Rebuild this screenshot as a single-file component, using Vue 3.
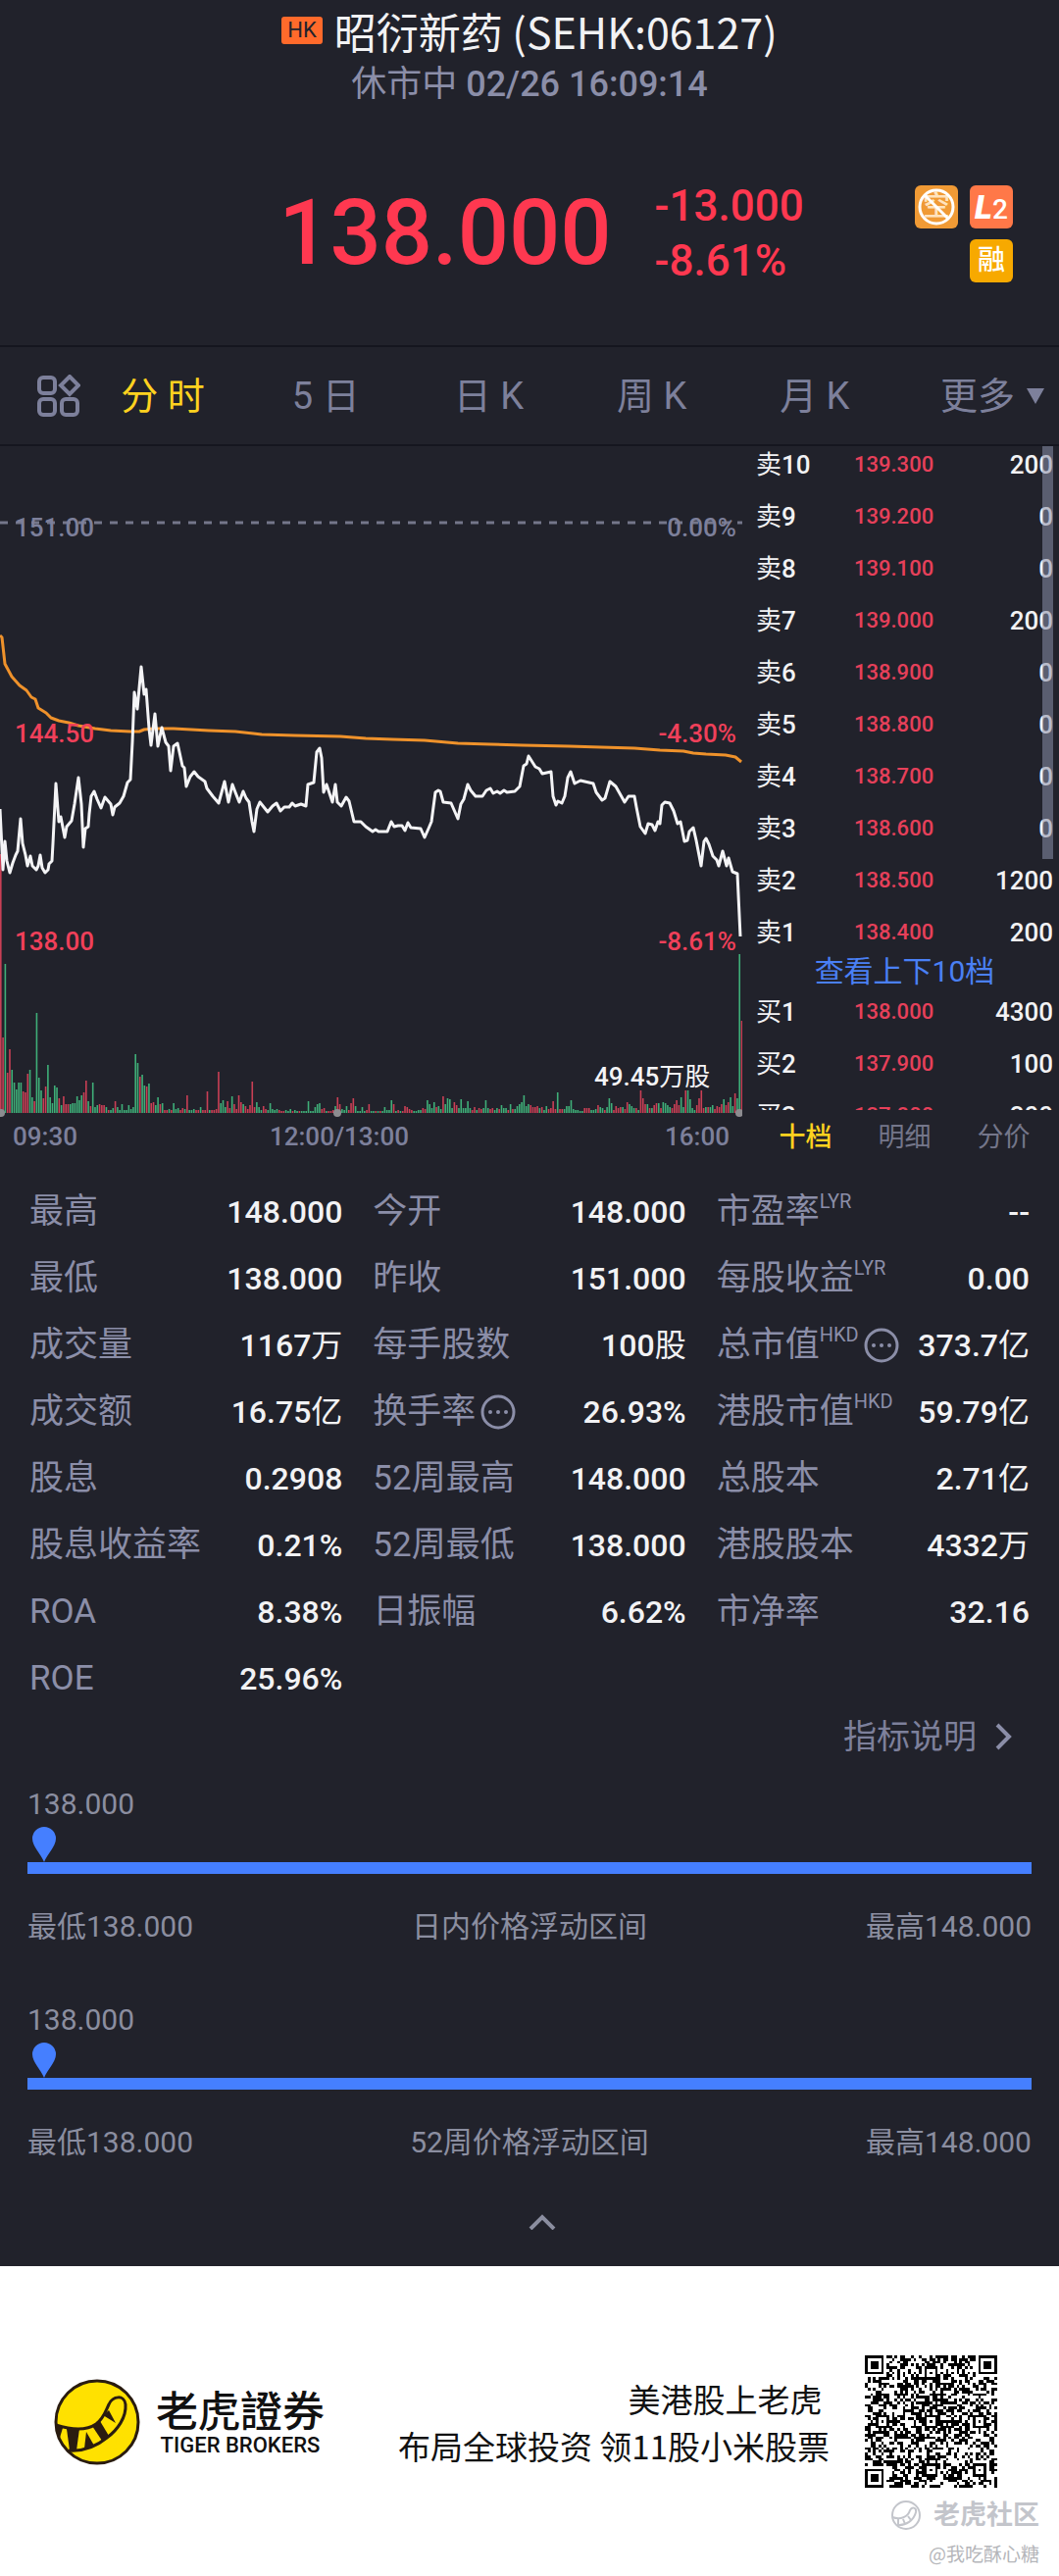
<template>
  <div class="page">
    <main class="quote">
      <header class="head">
        <h1 class="title"><span class="market">HK</span>昭衍新药 (SEHK:06127)</h1>
        <p class="status">休市中 <span class="num">02/26 16:09:14</span></p>
        <div class="price-row">
          <div class="price-main">
            <strong class="price">138.000</strong>
            <div class="change">
              <span>-13.000</span>
              <span>-8.61%</span>
            </div>
          </div>
          <div class="badges">
            <span class="badge short">空
              <svg viewBox="0 0 44 44" aria-hidden="true">
                <circle cx="22" cy="22" r="17" />
                <path d="M10 10 34 34" />
              </svg>
            </span>
            <span class="badge level"><b>L</b>2</span>
            <span class="badge margin">融</span>
          </div>
        </div>
      </header>

      <nav class="periods">
        <button class="layout-btn" aria-label="布局">
          <svg viewBox="0 0 44 44">
            <rect x="2" y="3" width="16" height="16" rx="4" />
            <path d="M33 2 42 11 33 20 24 11Z" />
            <rect x="2" y="25" width="16" height="16" rx="4" />
            <rect x="25" y="25" width="16" height="16" rx="4" />
          </svg>
        </button>
        <button
          v-for="p in periods"
          :key="p"
          class="period"
          :class="{active: p === period}"
          @click="period = p"
        >{{ p }}</button>
        <button class="period more">更多
          <svg viewBox="0 0 18 16" aria-hidden="true"><path d="M0 0H18L9 16Z" /></svg>
        </button>
      </nav>

      <section class="market-view">
        <svg class="chart" viewBox="0 0 757 735">
          <line class="base" x1="0" y1="78" x2="757" y2="78" />
          <rect
            v-for="(v, i) in volumes"
            :key="i"
            :x="i * 2.29"
            :y="680 - Math.abs(v)"
            width="1.6"
            :height="Math.abs(v)"
            :class="v < 0 ? 'down' : 'up'"
          />
          <polyline class="average" :points="average" />
          <polyline class="trend" :points="trend" />
          <circle cx="1" cy="680" r="4" />
          <circle cx="344" cy="680" r="4" />
          <circle cx="754" cy="680" r="4" />
          <rect class="label-bg" x="602" y="625" width="130" height="32" />
          <text class="muted" x="15" y="92">151.00</text>
          <text class="muted" x="751" y="92" text-anchor="end">0.00%</text>
          <text class="red" x="15" y="302">144.50</text>
          <text class="red" x="751" y="302" text-anchor="end">-4.30%</text>
          <text class="red" x="15" y="514">138.00</text>
          <text class="red" x="751" y="514" text-anchor="end">-8.61%</text>
          <text class="white" x="606" y="652">49.45<tspan class="unit">万股</tspan></text>
          <text class="muted" x="13" y="713">09:30</text>
          <text class="muted" x="346" y="713" text-anchor="middle">12:00/13:00</text>
          <text class="muted" x="744" y="713" text-anchor="end">16:00</text>
        </svg>

        <aside class="book">
          <div class="book-list">
            <table class="sells">
              <tbody>
                <tr v-for="row in sells" :key="row[0]">
                  <th><span class="unit">卖</span>{{ row[0] }}</th>
                  <td class="book-price">{{ row[1] }}</td>
                  <td>{{ row[2] }}</td>
                </tr>
              </tbody>
            </table>
            <a class="book-link" href="#">查看上下10档</a>
            <table>
              <tbody>
                <tr v-for="row in buys" :key="row[0]">
                  <th><span class="unit">买</span>{{ row[0] }}</th>
                  <td class="book-price">{{ row[1] }}</td>
                  <td>{{ row[2] }}</td>
                </tr>
              </tbody>
            </table>
            <div class="thumb"></div>
          </div>
          <div class="book-tabs">
            <button
              v-for="t in bookTabs"
              :key="t"
              :class="{active: t === bookTab}"
              @click="bookTab = t"
            >{{ t }}</button>
          </div>
        </aside>
      </section>

      <dl class="stats">
        <div v-for="s in stats" :key="s.name" class="stat">
          <dt>{{ s.name }}<sup v-if="s.sup">{{ s.sup }}</sup><svg v-if="s.tip" viewBox="0 0 36 36" aria-hidden="true">
            <circle class="ring" cx="18" cy="18" r="16" />
            <circle cx="10" cy="18" r="2" />
            <circle cx="18" cy="18" r="2" />
            <circle cx="26" cy="18" r="2" />
          </svg></dt>
          <dd>{{ s.value }}<span v-if="s.unit" class="unit">{{ s.unit }}</span></dd>
        </div>
      </dl>

      <div class="explain">
        <a href="#">指标说明
          <svg viewBox="0 0 18 28" aria-hidden="true"><path d="M3 2 15 14 3 26" /></svg>
        </a>
      </div>

      <section v-for="r in ranges" :key="r" class="range">
        <div class="range-now">138.000</div>
        <svg class="pin" viewBox="0 0 26 36" aria-hidden="true">
          <path d="M13 36C10 28 1 20 1 12a12 12 0 0 1 24 0C25 20 16 28 13 36Z" />
        </svg>
        <div class="range-bar"></div>
        <div class="range-text">
          <span>最低138.000</span>
          <span>{{ r }}</span>
          <span>最高148.000</span>
        </div>
      </section>

      <button class="collapse" aria-label="收起">
        <svg viewBox="0 0 28 16"><path d="M2 15 14 3 26 15" /></svg>
      </button>
    </main>

    <footer class="foot">
      <div class="foot-row">
        <svg class="logo" viewBox="0 0 88 88" aria-hidden="true">
          <circle cx="44" cy="44" r="42" fill="#ffe100" stroke="#2a1c10" stroke-width="3" />
          <g fill="none" stroke="#2a1c10" stroke-width="3">
            <path d="M2 47C18 52 33 53 43 46C51 40 53 32 56 26C60 17 72 16 73 26C74 39 65 52 54 60C43 69 29 74 15 73" />
          </g>
          <g fill="#2a1c10">
            <path d="M2 46 9 50 6 60 3 56Z" />
            <path d="M13 51H26L23 73H16Z" />
            <path d="M33 54 41 68 31 71Z" />
            <path d="M39 48 47 43 56 58 49 63Z" />
            <path d="M50 37 56 32 63 45Z" />
          </g>
        </svg>
        <div class="brand">
          <b>老虎證券</b>
          <span>TIGER BROKERS</span>
        </div>
        <p class="slogan">美港股上老虎&nbsp;<br>布局全球投资 领11股小米股票</p>
        <svg class="qr" viewBox="0 0 49 49" shape-rendering="crispEdges" role="img" aria-label="二维码">
          <path :d="qrPath" />
        </svg>
      </div>
      <div class="community">
        <svg viewBox="0 0 32 32" aria-hidden="true">
          <circle cx="16" cy="16" r="14" />
          <path d="M2 18C10 21 18 18 20 11C22 7 27 8 26 13C24 21 16 27 7 26M8 20V25M13 20 15 25M18 17 21 21" />
        </svg>
        <b>老虎社区</b>
      </div>
      <div class="author">@我吃酥心糖</div>
    </footer>
  </div>
</template>

<script setup>
import {ref} from "vue";

const periods = ['分 时', '5 日', '日 K', '周 K', '月 K']
const period = ref('分 时')
const bookTabs = ['十档', '明细', '分价']
const bookTab = ref('十档')

const sells = [
  [10, '139.300', 200],
  [9, '139.200', 0],
  [8, '139.100', 0],
  [7, '139.000', 200],
  [6, '138.900', 0],
  [5, '138.800', 0],
  [4, '138.700', 0],
  [3, '138.600', 0],
  [2, '138.500', 1200],
  [1, '138.400', 200]
]
const buys = [
  [1, '138.000', 4300],
  [2, '137.900', 100],
  [3, '137.800', 200]
]

const stats = [
  {name: '最高', value: '148.000'},
  {name: '今开', value: '148.000'},
  {name: '市盈率', sup: 'LYR', value: '--'},
  {name: '最低', value: '138.000'},
  {name: '昨收', value: '151.000'},
  {name: '每股收益', sup: 'LYR', value: '0.00'},
  {name: '成交量', value: '1167', unit: '万'},
  {name: '每手股数', value: '100', unit: '股'},
  {name: '总市值', sup: 'HKD', tip: true, value: '373.7', unit: '亿'},
  {name: '成交额', value: '16.75', unit: '亿'},
  {name: '换手率', tip: true, value: '26.93%'},
  {name: '港股市值', sup: 'HKD', value: '59.79', unit: '亿'},
  {name: '股息', value: '0.2908'},
  {name: '52周最高', value: '148.000'},
  {name: '总股本', value: '2.71', unit: '亿'},
  {name: '股息收益率', value: '0.21%'},
  {name: '52周最低', value: '138.000'},
  {name: '港股股本', value: '4332', unit: '万'},
  {name: 'ROA', value: '8.38%'},
  {name: '日振幅', value: '6.62%'},
  {name: '市净率', value: '32.16'},
  {name: 'ROE', value: '25.96%'}
]
const ranges = ['日内价格浮动区间', '52周价格浮动区间']

const average = '0,193 2,195 5,222 12,235 20,244 27,249 32,256 36,258 39,267 47,272 52,277 60,280 70,282 80,285 97,288 113,290 133,291 142,291 147,289 157,288 177,288 213,290 240,291 267,294 300,295 347,296 373,298 400,299 433,300 467,303 500,304 533,305 580,306 613,307 647,308 673,310 697,311 707,313 720,314 740,315 750,317 756,322'

const trend = '0,370 3,432 5,403 7,423 10,435 13,425 16,417 18,413 21,380 23,405 26,417 28,428 31,418 33,428 37,432 39,428 41,417 43,430 46,435 49,432 50,426 53,423 54,405 57,344 60,383 62,378 66,399 68,388 73,382 76,365 80,338 83,365 85,409 87,390 90,388 91,375 93,357 96,352 99,360 103,369 107,358 113,365 115,376 117,368 122,364 126,357 130,343 133,340 135,302 137,251 140,268 144,225 147,253 149,248 152,288 154,305 158,273 161,306 165,287 169,302 172,306 174,331 177,306 181,303 183,312 186,326 188,328 190,347 194,337 198,332 202,337 209,342 211,349 217,357 223,364 226,353 229,342 233,363 237,345 240,353 244,363 248,352 251,359 254,363 257,383 259,393 262,370 265,363 273,373 278,367 282,364 286,372 290,368 295,368 298,364 301,367 307,365 312,367 314,345 320,343 323,312 326,308 328,318 330,353 333,345 337,357 339,363 342,345 344,363 348,367 353,358 356,362 361,383 368,383 373,388 380,393 383,391 386,393 395,393 399,383 402,388 406,387 410,387 413,392 416,384 419,389 429,390 433,399 437,390 440,383 444,353 447,351 449,352 452,363 460,364 467,380 470,365 473,360 477,345 480,351 485,357 492,357 496,351 500,349 503,354 507,352 510,354 514,351 517,353 525,352 530,347 534,326 537,324 539,316 546,327 550,329 553,334 562,332 564,357 567,366 569,362 573,364 576,357 579,338 582,332 586,344 592,341 605,344 608,353 614,361 617,359 622,342 628,347 637,363 641,357 647,357 649,368 653,388 658,395 661,385 665,386 668,392 671,383 673,385 675,366 678,363 683,364 687,372 691,385 694,383 698,403 701,402 703,393 707,389 710,402 715,428 718,403 720,400 723,406 727,418 731,422 733,428 737,413 741,428 743,420 747,434 752,436 755,500'

// volume per minute, negative = red bar
const volumes = [
  -264, -77, 152, -41, -65, 44, 31, 24, 31, 31, -22, -21, -40, 44, 16, -12, 102, 36, 23, -15,
  -27, 49, 16, 10, 28, 26, -15, 8, -17, -9, -9, 9, 10, 10, 17, 13, 18, -21, -33, 12,
  -7, 31, 6, 8, -9, -8, -8, 6, -3, 3, 5, -12, 6, 3, 9, 3, 3, 8, 4, 6,
  60, 51, -37, 39, 28, -27, 30, -10, -11, 8, 16, -9, 10, -3, -3, 4, -3, 10, 4, 5,
  -3, -5, 4, -18, 3, 3, 4, -3, -3, 6, -3, -3, -22, 3, -3, -3, -4, -42, 10, 13,
  6, -12, -5, 17, -9, -4, -18, -11, 9, -7, -4, -8, -32, -6, 11, 6, 3, -7, -4, 3,
  10, 4, 3, 4, -3, -2, -2, 3, 2, 4, -2, 3, 2, -2, 2, 2, 2, 12, 2, 2,
  6, 9, 10, -4, -5, 2, -2, -2, -3, 7, -16, -9, 4, 3, 7, -3, -10, -15, 7, 2,
  2, 6, 2, -3, -9, 2, 2, -2, 2, -2, 2, 6, 3, 3, 13, -9, 2, -3, 2, -2,
  -7, -6, -4, -3, 2, 2, 3, 3, -5, -4, 13, 9, 5, 11, -6, 7, 4, -17, 9, 15,
  14, 5, -11, -8, 5, 14, 5, 5, 12, 5, -3, -6, 3, -5, -4, 5, 13, 5, -4, -5,
  3, 5, -4, 8, 5, 5, -3, 9, -4, 4, 7, 9, 11, 18, 7, 9, -8, -6, -6, -7,
  5, -6, 3, 7, -4, -5, -12, -4, 21, -4, -4, 4, 7, 7, 13, 4, 3, 3, 2, 2,
  -5, -5, -5, 3, 3, 4, -8, 6, 5, -3, 6, 15, 10, -3, -7, -5, -6, 6, -4, -11,
  9, 7, 5, -5, 3, -23, -15, -9, 9, -5, 5, -8, -10, 10, -5, 11, 10, 8, 6, -5,
  -9, -13, -8, 16, 6, -23, 23, 14, 5, 3, -8, -15, -23, -5, 6, -6, 6, 8, -4, -7,
  -6, -9, 14, -8, -11, 16, 7, -20, 15, 162, -94
]

const qrPath = buildQr(49)

function buildQr(size) {
  const cells = []
  let seed = 6127
  for (let y = 0; y < size; y++) {
    cells.push([])
    for (let x = 0; x < size; x++) {
      seed = (seed * 1103515245 + 12345) % 2147483648
      cells[y].push(seed / 2147483648 < 0.5)
    }
  }
  const square = (cx, cy, radius, dark) => {
    for (let y = Math.max(0, cy - radius); y <= Math.min(size - 1, cy + radius); y++)
      for (let x = Math.max(0, cx - radius); x <= Math.min(size - 1, cx + radius); x++)
        cells[y][x] = dark
  }
  for (let i = 8; i < size - 8; i++)
    cells[6][i] = cells[i][6] = i % 2 === 0
  for (const [x, y] of [[3, 3], [size - 4, 3], [3, size - 4]]) {
    square(x, y, 4, false)
    square(x, y, 3, true)
    square(x, y, 2, false)
    square(x, y, 1, true)
  }
  for (const [x, y] of [[24, 6], [6, 24], [24, 24], [42, 24], [24, 42], [42, 42]]) {
    square(x, y, 2, true)
    square(x, y, 1, false)
    square(x, y, 0, true)
  }
  return cells.map((row, y) => row.map((on, x) => on ? `M${x} ${y}h1v1h-1z` : '').join('')).join('')
}
</script>

<style>
body {
  margin: 0;
  background: #fff;
}
</style>

<style scoped>
.page {
  font-family: Roboto, "Noto Sans CJK SC", sans-serif;
}
button {
  padding: 0;
  border: none;
  background: none;
  color: inherit;
  font: inherit;
}
a {
  text-decoration: none;
}
.unit {
  font-weight: 400;
}
.quote {
  background: #21222b;
  color: #f2f2f4;
}

.head {
  box-sizing: border-box;
  height: 354px;
  padding-top: 6px;
  border-bottom: 2px solid #15161f;
}
.title {
  display: flex;
  align-items: center;
  justify-content: center;
  gap: 12px;
  margin: 0;
  font: 400 43px/50px "Noto Sans CJK SC", sans-serif;
}
.market {
  padding: 0 6px;
  border-radius: 3px;
  background: #ff6a2b;
  color: #21222b;
  font: 400 22px/28px Roboto, sans-serif;
}
.status {
  margin: 8px 0 0;
  color: #8b8ea8;
  font-size: 36px;
  line-height: 44px;
  text-align: center;
}
.num {
  font-weight: 500;
}
.price-row {
  display: grid;
  grid-template-columns: 1fr auto 1fr;
  align-items: center;
  padding: 0 47px 0 71px;
  margin-top: 74px;
}
.price-main {
  grid-column: 2;
  display: flex;
  align-items: center;
  gap: 44px;
  color: #ff3850;
}
.price {
  font-size: 92px;
  font-weight: 500;
  line-height: 112px;
}
.change {
  display: flex;
  flex-direction: column;
  font-size: 44px;
  font-weight: 500;
  line-height: 56px;
}
.badges {
  justify-self: end;
  display: grid;
  grid-template-columns: 44px 44px;
  gap: 11px 12px;
}
.badge {
  position: relative;
  height: 44px;
  border-radius: 6px;
  color: #fff;
  font-size: 28px;
  font-weight: 500;
  line-height: 44px;
  text-align: center;
}
.short {
  background: #f09a35;
  color: #ffe3bd;
}
.short svg {
  position: absolute;
  inset: 0;
  fill: none;
  stroke: #fff;
  stroke-width: 3;
}
.level {
  background: #ff7848;
}
.level b {
  font-size: 34px;
  font-style: italic;
  font-weight: 900;
}
.margin {
  grid-column: 2;
  background: #f7a900;
}

.periods {
  display: flex;
  align-items: center;
  height: 99px;
  border-bottom: 2px solid #15161f;
  color: #7d809b;
}
.layout-btn {
  width: 83px;
  padding-left: 38px;
}
.layout-btn svg {
  display: block;
  width: 44px;
  height: 44px;
  fill: none;
  stroke: #7d809b;
  stroke-width: 4;
}
.period {
  flex: 1 1 0;
  font-size: 38px;
  line-height: 56px;
}
.period.active {
  color: #ffd21f;
}
.more {
  display: flex;
  align-items: center;
  justify-content: flex-end;
  gap: 12px;
}
.more svg {
  width: 18px;
  height: 16px;
  margin-right: 15px;
  fill: #7d809b;
}

.market-view {
  display: grid;
  grid-template-columns: 757fr 323fr;
}
.chart {
  display: block;
  width: 100%;
  font-size: 26px;
  font-weight: 500;
}
.base {
  stroke: #74768a;
  stroke-width: 3;
  stroke-dasharray: 8 8;
}
.average,
.trend {
  fill: none;
  stroke-width: 3;
  stroke-linejoin: round;
}
.average {
  stroke: #ef922b;
}
.trend {
  stroke: #f4f4f6;
}
.chart circle {
  fill: #8c8c90;
}
.up {
  fill: #3fae78;
}
.down {
  fill: #c93f55;
}
.label-bg {
  fill: #21222b;
}
.muted {
  fill: #7d809b;
}
.red {
  fill: #f0405a;
}
.white {
  fill: #f4f4f6;
}

.book {
  padding: 0 6px 0 14px;
}
.book-list {
  position: relative;
  height: 677px;
  overflow: hidden;
}
.book table {
  width: 100%;
  border-collapse: collapse;
}
.book .sells {
  margin-top: -8px;
}
.book th,
.book td {
  height: 53px;
  padding: 0;
  font-size: 26px;
  font-weight: 500;
  line-height: 32px;
}
.book th {
  width: 100px;
  text-align: left;
}
.book td {
  text-align: right;
}
.book .book-price {
  color: #e6405a;
  font-size: 22px;
  text-align: left;
}
.book-link {
  display: block;
  color: #4a80f5;
  font-size: 30px;
  line-height: 28px;
  text-align: center;
}
.thumb {
  position: absolute;
  top: 0;
  right: 0;
  width: 11px;
  height: 421px;
  background: rgba(139, 144, 170, 0.55);
}
.book-tabs {
  display: flex;
}
.book-tabs button {
  flex: 1;
  color: #74768a;
  font-size: 27px;
  line-height: 56px;
}
.book-tabs .active {
  color: #ffd21f;
  font-weight: 500;
}

.stats {
  display: grid;
  grid-template-columns: repeat(3, 1fr);
  column-gap: 31px;
  margin: 0;
  padding: 12px 30px 1px;
}
.stat {
  display: flex;
  align-items: center;
  justify-content: space-between;
  height: 68px;
  white-space: nowrap;
}
.stat dt {
  display: flex;
  align-items: center;
  color: #8b8ea8;
  font-size: 35px;
  line-height: 50px;
}
.stat sup {
  align-self: flex-start;
  font-size: 20px;
  line-height: 28px;
}
.stat svg {
  width: 36px;
  height: 36px;
  margin-left: 5px;
  fill: #8b8ea8;
}
.stat .ring {
  fill: none;
  stroke: #8b8ea8;
  stroke-width: 3;
}
.stat dd {
  margin: 0;
  font-size: 32px;
  font-weight: 500;
  line-height: 50px;
}
.explain {
  display: flex;
  justify-content: flex-end;
  padding-right: 48px;
}
.explain a {
  display: flex;
  align-items: center;
  gap: 18px;
  color: #7d809b;
  font-size: 34px;
  line-height: 48px;
}
.explain svg {
  width: 18px;
  height: 28px;
  fill: none;
  stroke: #8b8ea8;
  stroke-width: 4;
}

.range {
  margin: 25px 28px 55px;
  color: #8b8ea0;
  font-size: 30px;
  line-height: 40px;
}
.pin {
  display: block;
  width: 26px;
  height: 36px;
  margin: 3px 0 0 4px;
  fill: #457fff;
}
.range-bar {
  height: 12px;
  background: #457fff;
}
.range-text {
  display: flex;
  justify-content: space-between;
  margin-top: 34px;
}
.range + .range {
  margin-top: 0;
  margin-bottom: 0;
}
.collapse {
  display: block;
  margin: 0 auto;
  padding: 53px 0 37px 26px;
}
.collapse svg {
  display: block;
  width: 28px;
  height: 16px;
  fill: none;
  stroke: #8b8ea0;
  stroke-width: 4;
}

.foot {
  padding: 91px 20px 8px 55px;
  color: #111;
}
.foot-row {
  display: flex;
  align-items: center;
  padding-right: 43px;
}
.logo {
  width: 88px;
  height: 88px;
}
.brand {
  display: flex;
  flex-direction: column;
  margin-left: 16px;
}
.brand b {
  font: 500 43px/48px "Noto Sans CJK TC", sans-serif;
}
.brand span {
  font-size: 22px;
  font-weight: 500;
  line-height: 28px;
  text-align: center;
}
.slogan {
  flex: 1;
  margin: 0 36px 0 0;
  font: 400 33px/48px "Noto Sans CJK SC", sans-serif;
  text-align: right;
}
.qr {
  width: 135px;
  height: 135px;
}
.community {
  display: flex;
  align-items: center;
  justify-content: flex-end;
  gap: 12px;
  margin-top: 11px;
  color: #c3c5cb;
  font-size: 27px;
  line-height: 34px;
}
.community svg {
  width: 32px;
  height: 32px;
  fill: none;
  stroke: #c3c5cb;
  stroke-width: 2;
}
.author {
  margin-top: 7px;
  color: #b5b6ba;
  font: 400 19px/30px "Noto Sans CJK SC", sans-serif;
  text-align: right;
}
</style>
